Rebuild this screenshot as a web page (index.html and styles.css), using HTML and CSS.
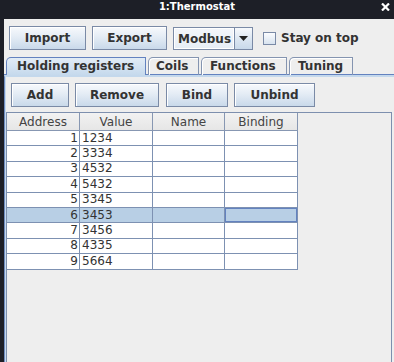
FILE: index.html
```html
<!DOCTYPE html>
<html lang="en">
<head>
    <meta charset="UTF-8">
    <title>1:Thermostat</title>
    <link rel="stylesheet" href="styles.css">
</head>
<body>
    <div class="window">
        <div class="title-bar">
            <span class="title">1:Thermostat</span>
            <svg class="close" width="9" height="8" viewBox="0 0 9 8">
                <path d="M1 0.5 L8 7.5 M8 0.5 L1 7.5" stroke="#fff" stroke-width="2.2"/>
            </svg>
        </div>

        <div class="frame">
            <!-- top toolbar -->
            <div class="toolbar">
                <button type="button" class="btn import">Import</button>
                <button type="button" class="btn export">Export</button>
                <div class="combo">
                    <span class="combo-value">Modbus</span>
                    <span class="combo-arrow">
                        <svg width="9" height="5" viewBox="0 0 9 5"><path d="M0 0 H9 L4.5 5 Z" fill="#222"/></svg>
                    </span>
                </div>
                <label class="check"><span class="check-box"></span>Stay on top</label>
            </div>

            <!-- tabs -->
            <div class="tabs">
                <div class="tab selected holding">Holding registers</div>
                <div class="tab coils">Coils</div>
                <div class="tab functions">Functions</div>
                <div class="tab tuning">Tuning</div>
            </div>

            <div class="tab-panel">
                <div class="actions">
                    <button type="button" class="btn add">Add</button>
                    <button type="button" class="btn remove">Remove</button>
                    <button type="button" class="btn bind">Bind</button>
                    <button type="button" class="btn unbind">Unbind</button>
                </div>

                <div class="scroll">
                    <table class="grid">
                        <thead>
                            <tr><th>Address</th><th>Value</th><th class="narrow">Name</th><th>Binding</th></tr>
                        </thead>
                        <tbody>
                            <tr><td class="addr">1</td><td>1234</td><td></td><td></td></tr>
                            <tr><td class="addr">2</td><td>3334</td><td></td><td></td></tr>
                            <tr><td class="addr">3</td><td>4532</td><td></td><td></td></tr>
                            <tr><td class="addr">4</td><td>5432</td><td></td><td></td></tr>
                            <tr><td class="addr">5</td><td>3345</td><td></td><td></td></tr>
                            <tr class="selected"><td class="addr">6</td><td>3453</td><td></td><td class="focus"></td></tr>
                            <tr><td class="addr">7</td><td>3456</td><td></td><td></td></tr>
                            <tr><td class="addr">8</td><td>4335</td><td></td><td></td></tr>
                            <tr><td class="addr">9</td><td>5664</td><td></td><td></td></tr>
                        </tbody>
                    </table>
                </div>
            </div>
        </div>
    </div>
</body>
</html>
```

FILE: styles.css
```css
* {
    box-sizing: border-box;
    margin: 0;
    padding: 0;
}

body {
    width: 394px;
    height: 362px;
    overflow: hidden;
    background-color: #1d1f27;
    font-family: 'DejaVu Sans', sans-serif;
    font-size: 12px;
    color: #333;
}

.window {
    display: flex;
    flex-direction: column;
    height: 362px;
}

.title-bar {
    position: relative;
    height: 19px;
    display: flex;
    justify-content: center;
    padding-top: 1px;
    color: #fff;
    font-weight: bold;
    font-size: 10px;
    line-height: 12px;
}

.close {
    position: absolute;
    right: 4px;
    top: 3px;
}

.frame {
    flex: 1;
    display: flex;
    flex-direction: column;
    margin-left: 4px;
    background-color: #eeeeee;
}

/* buttons */
.btn {
    height: 24px;
    padding: 0;
    border: 1px solid #7a8aa6;
    background: linear-gradient(#f7f9fc, #e4ecf5 45%, #c9d9ea);
    box-shadow: inset 1px 1px 0 #fff;
    font-family: 'DejaVu Sans', sans-serif;
    font-weight: bold;
    font-size: 12px;
    color: #333;
}

.btn.import { width: 77px; }
.btn.export { width: 75px; }
.btn.add { width: 58px; }
.btn.remove { width: 84px; }
.btn.bind { width: 62px; }
.btn.unbind { width: 81px; }

.toolbar {
    display: flex;
    align-items: center;
    gap: 6px;
    height: 38px;
    padding-left: 5px;
}

.combo {
    display: flex;
    width: 80px;
    height: 23px;
    margin-right: 4px;
    border: 1px solid #7a8aa6;
    background: linear-gradient(#f4f7fb, #e6edf5);
    font-weight: bold;
}

.combo-value {
    flex: 1;
    padding-left: 3px;
    line-height: 20px;
    border: 1px solid #fff;
}

.combo-arrow {
    width: 18px;
    display: flex;
    align-items: center;
    justify-content: center;
    border-left: 1px solid #7a8aa6;
    background: linear-gradient(#f7f9fc, #dde7f2 50%, #c9d9ea);
}

.check {
    display: flex;
    align-items: center;
    gap: 5px;
    font-weight: bold;
}

.check-box {
    width: 13px;
    height: 13px;
    border: 1px solid #7a8aa6;
    background: linear-gradient(#fbfcfe, #d8e3ef);
}

/* tabs */
.tabs {
    display: flex;
    gap: 2px;
    height: 18px;
    padding-left: 2px;
    border-bottom: 1px solid #6382bf;
}

.tab {
    height: 18px;
    padding-left: 9px;
    border: 1px solid #8494b0;
    border-bottom: none;
    border-top-left-radius: 5px;
    box-shadow: inset 1px 1px 0 #fff;
    font-weight: bold;
    line-height: 16px;
    white-space: nowrap;
    overflow: hidden;
}

.tab.holding { width: 140px; padding-left: 10px; }
.tab.coils { width: 51px; padding-left: 7px; }
.tab.functions { width: 86px; padding-left: 8px; }
.tab.tuning { width: 64px; padding-left: 8px; }

.tab.selected {
    height: 19px;
    border-color: #6382bf;
    background: linear-gradient(#e2ecf6, #c4d8ec);
    box-shadow: none;
}

.tab-panel {
    flex: 1;
    display: flex;
    flex-direction: column;
    border-top: 2px solid #c4d8ec;
    border-left: 1px solid #6f8cc0;
    box-shadow: inset 1px 0 0 #c4d8ec;
    padding: 6px 0 0 1px;
}

.actions {
    display: flex;
    gap: 6px;
    padding-left: 5px;
    margin-bottom: 5px;
}

.actions .btn.bind {
    margin-left: 1px;
}

/* table */
.scroll {
    flex: 1;
    margin-right: 2px;
    border: 1px solid #7d8fae;
    border-bottom: none;
}

.grid {
    border-collapse: separate;
    border-spacing: 0;
    table-layout: fixed;
    width: 291px;
}

.grid th {
    width: 73px;
    height: 18px;
    border-right: 1px solid #8797b2;
    border-bottom: 1px solid #8797b2;
    background: linear-gradient(#f2f2f2, #e6e6e6);
    font-weight: normal;
    color: #444;
    text-align: center;
}

.grid th.narrow {
    width: 72px;
}

.grid td {
    height: 15.4px;
    padding: 0 2px;
    border-right: 1px solid #7d91b2;
    border-bottom: 1px solid #7d91b2;
    background-color: #fff;
    line-height: 13px;
    white-space: nowrap;
}

.grid td.addr {
    text-align: right;
    padding-right: 1px;
}

.grid tr.selected td {
    background-color: #b8cfe5;
}

.grid td.focus {
    box-shadow: inset 0 0 0 1px #6382bf;
}
```
